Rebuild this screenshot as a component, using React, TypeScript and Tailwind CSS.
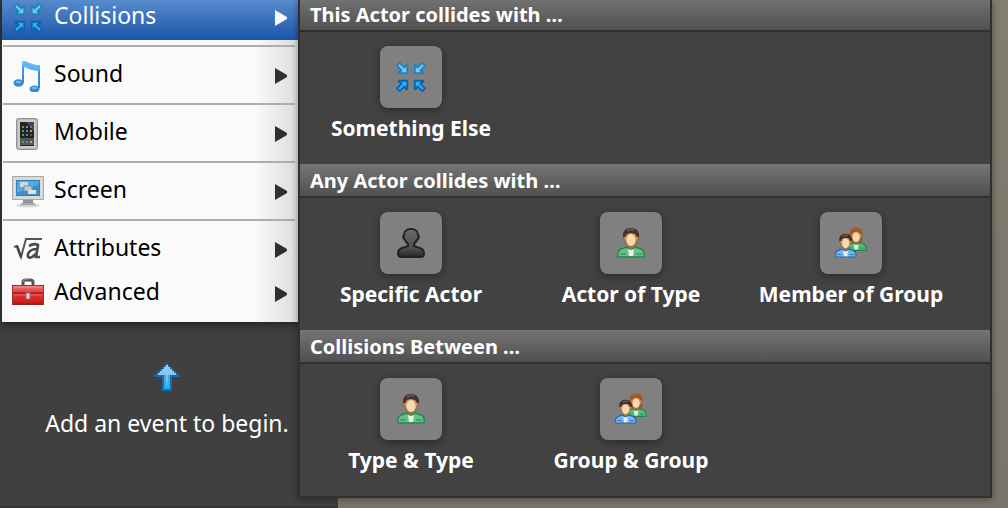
import React from 'react';

type IconProps = { className?: string };

function CollideIcon({ className = 'size-8' }: IconProps) {
  const top = 'M4 1l5 5 2-3h1v9H3v-1l3-2-5-5zM28 1l-5 5-2-3h-1v9h9v-1l-3-2 5-5z';
  const bottom = 'M4 31l5-5 2 3h1v-9H3v1l3 2-5 5zM28 31l-5-5-2 3h-1v-9h9v1l-3 2 5 5z';
  return (
    <svg viewBox="-1 -1 34 34" className={className} aria-hidden="true">
      <path d={top} fill="#6fcdf8" stroke="#2580bd" strokeWidth="2" strokeLinejoin="round" />
      <path d={bottom} fill="#26b4fb" stroke="#1261a8" strokeWidth="2" strokeLinejoin="round" />
    </svg>
  );
}

function MusicIcon() {
  return (
    <svg viewBox="0 0 32 32" className="size-8" aria-hidden="true">
      <defs>
        <linearGradient id="note" x2="0" y2="1">
          <stop stopColor="#72c7f6" />
          <stop offset=".5" stopColor="#459cf0" />
          <stop offset="1" stopColor="#2f7fce" />
        </linearGradient>
      </defs>
      <path d="M10 1h3l5 2 6 2h4v23h-2V11l-6-1-8-3v16h-2z" fill="url(#note)" />
      <ellipse cx="6.500" cy="23" rx="5" ry="3.800" fill="#378bd0" />
      <ellipse cx="22.500" cy="29" rx="5" ry="3.600" fill="#378bd0" />
      <path d="M4 21h5v2H4zM20 27h5v2h-5z" fill="#72bce9" />
      <path d="M12 4l7 2 7 2" stroke="#5db5f3" strokeWidth="3" fill="none" />
      <path d="M11 7v15M27 11v17" stroke="#2d83e8" />
    </svg>
  );
}

function PhoneIcon() {
  const rows = [8, 12, 16, 23];
  return (
    <svg viewBox="0 0 32 32" className="size-8" aria-hidden="true">
      <rect x="4.500" y=".5" width="21" height="31" rx="2" fill="#b8b8b6" stroke="#90908e" />
      <rect x="6" y="2" width="18" height="28" rx="1" fill="#cacac8" />
      <rect x="8" y="4" width="14" height="24" fill="#232426" />
      <path d="M14 4h8v10z" fill="#44484c" />
      <path d="M8 20h14v7H8z" fill="#55585a" />
      {rows.map((y) => (
        <g key={y}>
          <rect x="10" y={y} width="2" height="2" fill="#59a332" />
          <rect x="14" y={y} width="2" height="2" fill={y === 8 ? '#ce6870' : '#4d83dc'} />
          <rect x="18" y={y} width="2" height="2" fill={y === 8 ? '#4d73b8' : y === 16 ? '#555555' : '#dba43b'} />
        </g>
      ))}
    </svg>
  );
}

function ScreenIcon() {
  return (
    <svg viewBox="0 0 32 32" className="size-8" aria-hidden="true">
      <ellipse cx="16" cy="29.500" rx="12" ry="1.800" fill="#d4d4d4" />
      <path d="M11 23h10v5H11z" fill="#929292" />
      <path d="M9 27h14v2H9z" fill="#a7a7a7" />
      <rect x=".5" y=".5" width="31" height="23" fill="#d9d9d6" stroke="#aaa9a7" />
      <rect x="4" y="4" width="24" height="16" fill="#3d8fcd" />
      <path d="M4 4h24v4L4 17z" fill="#59a7df" />
      <rect x="4.500" y="4.500" width="23" height="15" fill="none" stroke="#3280ba" />
      <path d="M8 6h8v5H8z" fill="#d4d8da" />
      <path d="M12 10h8v5h-8z" fill="#c3cdd4" stroke="#6995b3" />
      <path d="M16 14h8v4h-8z" fill="#e1e3e3" />
    </svg>
  );
}

function RootIcon() {
  return (
    <svg viewBox="0 0 32 32" className="size-8" aria-hidden="true">
      <path d="M2 13l3-1 4 11 5-18h16" fill="none" stroke="#555" strokeWidth="2" />
      <path d="M5 12l4 11" stroke="#444" strokeWidth="2.500" />
      <path d="M17 12q5-3 9-1l-2 12h4M25 15q-7 0-9 5-1 5 4 3l5-4" fill="none" stroke="#4b4b4b" strokeWidth="2.700" />
    </svg>
  );
}

function ToolboxIcon() {
  return (
    <svg viewBox="0 0 32 32" className="size-8" aria-hidden="true">
      <defs>
        <linearGradient id="toolbox" x2="0" y2="1">
          <stop stopColor="#ef7474" />
          <stop offset=".45" stopColor="#df3434" />
          <stop offset="1" stopColor="#cb1717" />
        </linearGradient>
      </defs>
      <path d="M11 8V4q0-2 3-2h4q3 0 3 2v4" fill="none" stroke="#555" strokeWidth="3" />
      <path d="M11 4q1-3 4-3h3" fill="none" stroke="#9b9b9b" />
      <rect x=".5" y="7.500" width="31" height="19" fill="url(#toolbox)" stroke="#9e3333" />
      <path d="M2 9h28" stroke="#f59292" />
      <path d="M1 15h30" stroke="#aa2727" strokeWidth="2" />
      <path d="M2 17h28" stroke="#eb6565" />
      <path d="M1 26h30" stroke="#8e2525" strokeWidth="2" />
      <rect x="14" y="15" width="4" height="6" fill="#ddd" stroke="#a66" />
    </svg>
  );
}

function SilhouetteIcon() {
  return (
    <svg viewBox="0 0 32 32" className="size-8" aria-hidden="true">
      <defs>
        <linearGradient id="silhouette" x2="0" y2="1">
          <stop stopColor="#6a6a6a" />
          <stop offset=".7" stopColor="#4e4e4e" />
          <stop offset="1" stopColor="#262626" />
        </linearGradient>
      </defs>
      <path
        d="M16 2c5 0 7 3 7 6 2 2 0 4-1 5-1 2-2 3-3 4v2c5 2 10 2 10 7 0 3-1 4-3 4H6c-2 0-3-1-3-4 0-5 5-5 10-7v-2c-1-1-2-2-3-4-1-1-3-3-1-5 0-3 2-6 7-6z"
        fill="url(#silhouette)"
        stroke="#222222"
        strokeWidth="2"
      />
    </svg>
  );
}

function Bust({ coat, edge, hair, long }: { coat: string; edge: string; hair: string; long?: boolean }) {
  return (
    <g>
      {long && <path d="M8 20V7q0-6 8-6t8 6v13z" fill={hair} />}
      <path d="M13 15h6v8h-6z" fill="#b97a3e" />
      <path d="M3 30q-1-6 3-8l6-2 4 3 4-3 6 2q4 2 3 8z" fill={coat} stroke={edge} strokeWidth="1.500" />
      <path d="M13 22l3 1 3-1-1 7h-4z" fill="#eeeeea" />
      <path d="M5 27h6M21 27h6" stroke={edge} strokeWidth="1" />
      <path d="M9 8q0-6 7-6t7 6l1 3-2 3q-2 6-6 6t-6-6l-2-3z" fill="#c98f58" stroke="#94602f" />
      <ellipse cx="16" cy="13" rx="4.600" ry="6" fill="#f8d8ac" />
      <path d="M8 10V7q1-6 8-6t8 6v3h-2l-2-3-4-1-4 1-2 3z" fill={hair} />
      <path d="M12 4q3-2 7-1" stroke="#89706c" fill="none" />
    </g>
  );
}

function PersonIcon() {
  return (
    <svg viewBox="0 0 32 32" className="size-8" aria-hidden="true">
      <Bust coat="#62c386" edge="#298552" hair="#423234" />
    </svg>
  );
}

function GroupIcon() {
  return (
    <svg viewBox="0 0 32 32" className="size-8" aria-hidden="true">
      <g transform="translate(9 0) scale(.76 .78)">
        <Bust coat="#57bd79" edge="#24834b" hair="#a35628" long />
      </g>
      <g transform="translate(-2 6) scale(.79 .8)">
        <Bust coat="#76b8ed" edge="#2567aa" hair="#402f32" />
      </g>
    </svg>
  );
}

function UpArrowIcon() {
  return (
    <svg viewBox="0 0 26 28" className="h-7 w-[26px]" shapeRendering="crispEdges" aria-hidden="true">
      <defs>
        <linearGradient id="up" x2="0" y2="1">
          <stop stopColor="#9bd0f5" />
          <stop offset=".5" stopColor="#7bc1f4" />
          <stop offset="1" stopColor="#08b9ff" />
        </linearGradient>
      </defs>
      <path d="M12 0h2v2h2v2h2v2h2v2h2v2h2v2h2v2h-8v14H8V14H0v-2h2v-2h2V8h2V6h2V4h2V2h2z" fill="#176caa" />
      <path d="M12 2h2v2h2v2h2v2h2v2h2v2h-6v14h-6V12H4v-2h2V8h2V6h2V4h2z" fill="url(#up)" />
      <path d="M10 12h2v12h-2zM14 12h2v12h-2z" fill="#43a5e5" />
    </svg>
  );
}

type Entry = { name: string; icon: React.ReactNode; active?: boolean; divided?: boolean };

const entries: Entry[] = [
  { name: 'Collisions', icon: <CollideIcon />, active: true, divided: true },
  { name: 'Sound', icon: <MusicIcon />, divided: true },
  { name: 'Mobile', icon: <PhoneIcon />, divided: true },
  { name: 'Screen', icon: <ScreenIcon />, divided: true },
  { name: 'Attributes', icon: <RootIcon /> },
  { name: 'Advanced', icon: <ToolboxIcon /> },
];

const sections = [
  { title: 'This Actor collides with …', items: [{ name: 'Something Else', icon: <CollideIcon /> }] },
  {
    title: 'Any Actor collides with …',
    items: [
      { name: 'Specific Actor', icon: <SilhouetteIcon /> },
      { name: 'Actor of Type', icon: <PersonIcon /> },
      { name: 'Member of Group', icon: <GroupIcon /> },
    ],
  },
  {
    title: 'Collisions Between …',
    items: [
      { name: 'Type & Type', icon: <PersonIcon /> },
      { name: 'Group & Group', icon: <GroupIcon /> },
    ],
  },
];

function MenuEntry({ name, icon, active, divided }: Entry) {
  return (
    <li>
      <button
        type="button"
        aria-haspopup="menu"
        className={
          active
            ? 'flex h-10 w-full items-center bg-linear-to-b from-[#568bcd] to-[#1c55a8] pr-2 pb-1 pl-2.5 text-left text-white'
            : 'flex h-11 w-full items-center pr-2 pl-2.5 text-left text-black'
        }
      >
        {icon}
        <span className="ml-2.5 flex-1 pb-1.5 text-[23px] leading-8">{name}</span>
        <svg viewBox="0 0 14 16" className="mr-0.5 h-4 w-3.5" aria-hidden="true">
          <path d="M1 0l12 7v2L1 16z" fill={active ? '#f5f7fa' : '#303030'} />
        </svg>
      </button>
      {divided && <hr className="mt-[5px] mr-[3px] mb-[7px] ml-px border-t-2 border-[#adadad]" />}
    </li>
  );
}

export default function App() {
  return (
    <main className="relative h-screen overflow-hidden bg-linear-to-b from-[#807e70] to-[#77746a] font-['Noto_Sans','Lucida_Grande',sans-serif]">
      <div className="flex h-full w-[338px] flex-col border-b-2 border-[#353535] bg-[#404040] pl-0.5">
        <nav className="w-[296px] shadow-[0_1px_8px_2px_#222222]">
          <ul className="bg-linear-to-r from-[#fafafa] from-85% to-[#dddddd] pb-1.5">
            {entries.map((entry) => (
              <MenuEntry key={entry.name} {...entry} />
            ))}
          </ul>
        </nav>
        <div className="flex flex-col items-center pt-[41px] pr-1.5 text-white">
          <UpArrowIcon />
          <p className="mt-4 text-[23px] leading-8 whitespace-nowrap">Add an event to begin.</p>
        </div>
      </div>

      <div className="absolute top-0 right-4 left-[298px] border-2 border-t-0 border-[#303030] bg-[#424242] shadow-[0_1px_7px_#00000066]">
        {sections.map((section, index) => (
          <section key={section.title}>
            <h2
              className={
                index === 0
                  ? 'flex h-8 items-center border-b-2 border-[#303030] bg-linear-to-b from-[#717171] to-[#505050] pl-2.5 text-xl font-bold text-white'
                  : 'flex h-[34px] items-center border-b-2 border-[#303030] bg-linear-to-b from-[#757575] to-[#505050] pt-0.5 pl-2.5 text-xl font-bold text-white'
              }
            >
              {section.title}
            </h2>
            <div className="flex h-[132px] pt-3.5 pl-px">
              {section.items.map((item) => (
                <button key={item.name} type="button" className="flex w-[220px] flex-col items-center text-white">
                  <span className="flex size-[62px] items-center justify-center rounded-lg bg-[#808080] shadow-[0_2px_8px_#00000066]">
                    {item.icon}
                  </span>
                  <span className="mt-1.5 text-[21px] leading-7 font-bold whitespace-nowrap">{item.name}</span>
                </button>
              ))}
            </div>
          </section>
        ))}
      </div>
    </main>
  );
}
